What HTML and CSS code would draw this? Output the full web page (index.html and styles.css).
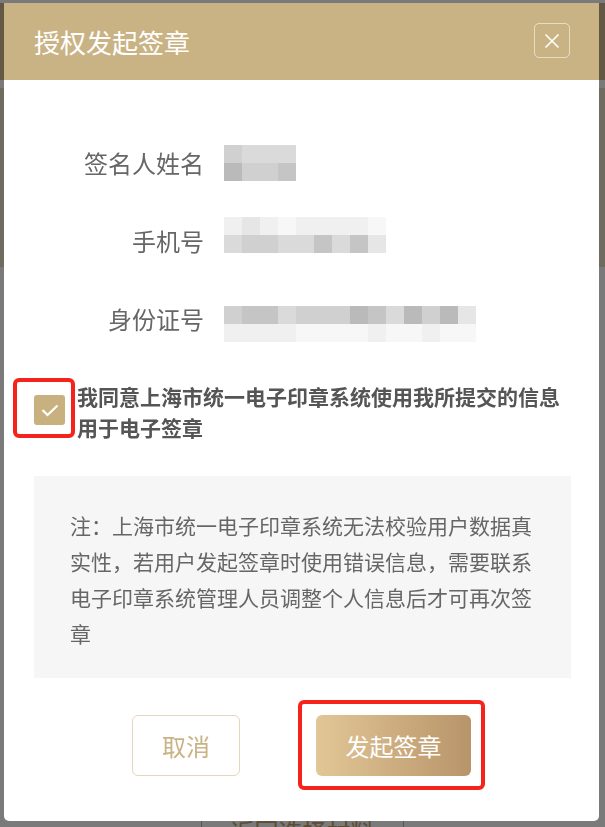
FILE: index.html
```html
<!DOCTYPE html>
<html lang="zh-CN">

<head>
    <meta charset="UTF-8">
    <meta name="viewport" content="width=device-width, initial-scale=1.0">
    <title>授权发起签章</title>
    <link rel="stylesheet" href="styles.css">
</head>

<body>
    <!-- 底层页面（被遮罩盖住） -->
    <div class="page">
        <div class="page-head"></div>
        <div class="page-band"></div>
        <button class="back-btn">返回选择材料</button>
    </div>
    <div class="mask"></div>

    <div class="dialog">
        <div class="dialog-head">
            <h2 class="dialog-title">授权发起签章</h2>
            <button class="close-btn">
                <svg width="16" height="16" viewBox="0 0 16 16">
                    <path d="M1.5 1.5L14.5 14.5M14.5 1.5L1.5 14.5" stroke="#fff" stroke-width="1.6" fill="none" />
                </svg>
            </button>
        </div>

        <div class="dialog-body">
            <div class="form-row">
                <span class="form-label">签名人姓名</span>
                <div class="mosaic cols4">
                    <i class="g3"></i><i class="g4"></i><i class="g4"></i><i class="g4"></i>
                    <i class="g1"></i><i class="g3"></i><i class="g3"></i><i class="g2"></i>
                </div>
            </div>
            <div class="form-row">
                <span class="form-label">手机号</span>
                <div class="mosaic cols9 up">
                    <i class="g6"></i><i class="g5"></i><i class="g6"></i><i class="g7"></i><i class="g6"></i><i class="g6"></i><i class="g6"></i><i class="g6"></i><i class="g7"></i>
                    <i class="g4"></i><i class="g3"></i><i class="g3"></i><i class="g4"></i><i class="g4"></i><i class="g2"></i><i class="g4"></i><i class="g2"></i><i class="g5"></i>
                </div>
            </div>
            <div class="form-row">
                <span class="form-label">身份证号</span>
                <div class="mosaic cols14 down">
                    <i class="g3"></i><i class="g2"></i><i class="g2"></i><i class="g4"></i><i class="g3"></i><i class="g3"></i><i class="g3"></i><i class="g1"></i><i class="g2"></i><i class="g4"></i><i class="g1"></i><i class="g3"></i><i class="g1"></i><i class="g5"></i>
                    <i class="g6"></i><i class="g6"></i><i class="g6"></i><i class="g6"></i><i class="g7"></i><i class="g7"></i><i class="g7"></i><i class="g7"></i><i class="g6"></i><i class="g7"></i><i class="g7"></i><i class="g6"></i><i class="g7"></i><i class="g7"></i>
                </div>
            </div>

            <label class="agree">
                <span class="agree-box">
                    <svg width="18" height="13" viewBox="0 0 18 13">
                        <polyline points="1.5,6 6.5,11 16.5,1.5" stroke="#fff" stroke-width="2.2" fill="none" />
                    </svg>
                </span>
                <span class="agree-text">我同意上海市统一电子印章系统使用我所提交的信息用于电子签章</span>
                <span class="mark mark-agree"></span>
            </label>

            <div class="notice">注：上海市统一电子印章系统无法校验用户数据真实性，若用户发起签章时使用错误信息，需要联系电子印章系统管理人员调整个人信息后才可再次签章</div>

            <div class="actions">
                <button class="btn btn-cancel">取消</button>
                <span class="btn-wrap">
                    <button class="btn btn-submit">发起签章</button>
                    <span class="mark mark-submit"></span>
                </span>
            </div>
        </div>
    </div>
</body>

</html>
```

FILE: styles.css
```css
* {
    margin: 0;
    padding: 0;
    box-sizing: border-box;
}

body {
    height: 827px;
    overflow: hidden;
    background: #fff;
    font-family: "Noto Sans CJK SC", "Noto Sans", sans-serif;
}

/* 底层页面 */
.page-head {
    height: 77px;
    margin-top: 3px;
    background-color: #cdb98f;
}

.page-band {
    height: 179px;
    margin-top: 8px;
    background-color: #e8dfc4;
}

.back-btn {
    display: block;
    width: 203px;
    height: 60px;
    margin: 533px 0 0 201px;
    font-family: inherit;
    font-size: 24px;
    color: #c2a069;
    background: #fff;
    border: 1px solid #b5b5b5;
    border-radius: 6px;
}

.mask {
    position: fixed;
    top: 0;
    left: 0;
    right: 0;
    bottom: 0;
    background: rgba(0, 0, 0, 0.52);
}

/* 弹窗 */
.dialog {
    position: fixed;
    top: 3px;
    left: 4px;
    width: 595px;
    height: 818px;
    background: #fff;
    border-radius: 0 0 5px 5px;
}

.dialog-head {
    display: flex;
    align-items: center;
    justify-content: space-between;
    height: 77px;
    padding: 0 29px 0 30px;
    background-color: #c9b384;
}

.dialog-title {
    font-size: 26px;
    font-weight: normal;
    line-height: 1;
    color: #fff;
}

.close-btn {
    display: flex;
    align-items: center;
    justify-content: center;
    width: 36px;
    height: 35px;
    margin-top: -2px;
    background: transparent;
    border: 1px solid rgba(255, 255, 255, 0.55);
    border-radius: 5px;
}

.dialog-body {
    padding-top: 44px;
}

.form-row {
    display: grid;
    grid-template-columns: 200px auto;
    column-gap: 20px;
    align-items: center;
    height: 78px;
}

.form-label {
    font-size: 24px;
    line-height: 1;
    color: #666;
    text-align: right;
}

/* 打码的信息 */
.mosaic {
    display: grid;
    grid-template-rows: 18px 18px;
    justify-self: start;
}

.mosaic i {
    display: block;
}

.cols4 {
    grid-template-columns: repeat(4, 18px);
}

.cols9 {
    grid-template-columns: repeat(9, 18px);
}

.cols14 {
    grid-template-columns: repeat(14, 18px);
}

.up {
    margin-bottom: 12px;
}

.down {
    margin-top: 10px;
}

.g1 { background: #bababa; }
.g2 { background: #c5c5c5; }
.g3 { background: #d0d0d0; }
.g4 { background: #dadada; }
.g5 { background: #e6e6e6; }
.g6 { background: #f0f0f0; }
.g7 { background: #f7f7f7; }

/* 同意勾选 */
.agree {
    position: relative;
    display: flex;
    align-items: center;
    gap: 12px;
    margin: 23px 33px 0 30px;
}

.agree-box {
    display: flex;
    align-items: center;
    justify-content: center;
    flex-shrink: 0;
    width: 31px;
    height: 30px;
    margin-bottom: 4px;
    background-color: #c8b07f;
    border-radius: 3px;
}

.agree-text {
    font-size: 21px;
    font-weight: bold;
    line-height: 31px;
    color: #555;
}

/* 红色标注框 */
.mark {
    position: absolute;
    border: 4px solid #f5231c;
    border-radius: 6px;
}

.mark-agree {
    left: -21px;
    top: -3px;
    width: 62px;
    height: 60px;
}

.notice {
    margin: 33px 28px 0 30px;
    padding: 31px 36px 27px;
    font-size: 21px;
    line-height: 36px;
    color: #666;
    background-color: #f6f6f6;
}

.actions {
    display: flex;
    justify-content: center;
    gap: 76px;
    margin-top: 37px;
}

.btn {
    height: 61px;
    font-family: inherit;
    font-size: 24px;
    border-radius: 6px;
}

.btn-cancel {
    width: 108px;
    color: #c9b284;
    background: #fff;
    border: 1px solid #e3d6ba;
}

.btn-wrap {
    position: relative;
    display: block;
}

.btn-submit {
    display: block;
    width: 155px;
    color: #fff;
    background: linear-gradient(90deg, #e2c796, #b8946a);
    border: none;
}

.mark-submit {
    top: -15px;
    right: -14px;
    bottom: -14px;
    left: -18px;
}
```
